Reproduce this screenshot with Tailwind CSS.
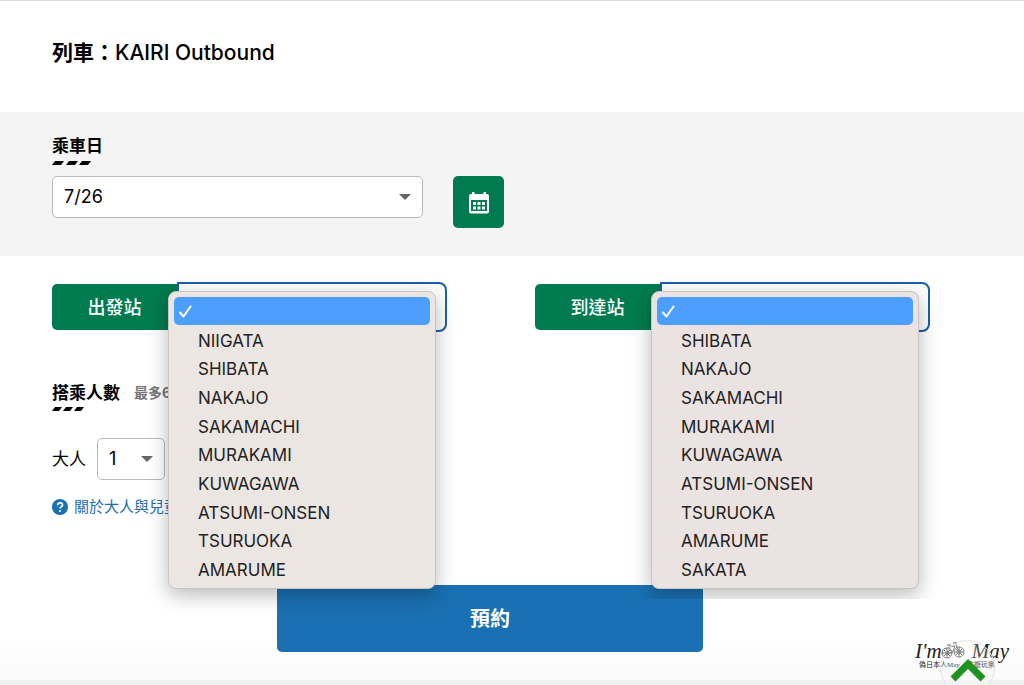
<!DOCTYPE html>
<html lang="zh-Hant">
<head>
<meta charset="utf-8">
<meta name="viewport" content="width=device-width, initial-scale=1">
<title>列車：KAIRI Outbound</title>
<script src="https://cdn.jsdelivr.net/npm/@tailwindcss/browser@4"></script>
</head>
<body class="relative flex min-h-screen flex-col overflow-hidden border-t border-[#dcdcdc] bg-white font-['Inter','Noto_Sans_CJK_TC',sans-serif] text-[17px] text-black">
<header class="px-[52px] pt-9 pb-[43px]">
  <h1 class="text-[21px] leading-8 font-bold">列車：<span class="font-medium">KAIRI Outbound</span></h1>
</header>

<section class="bg-[#f4f4f4] px-[52px] pt-5 pb-7">
  <label for="date" class="block leading-7 font-bold">乘車日</label>
  <svg class="mt-px block" width="40" height="4" viewBox="0 0 40 4" aria-hidden="true"><path d="M3 0H12L9 4H0ZM17 0H26L23 4H14ZM30 0H39L36 4H27Z"/></svg>
  <div class="mt-[11px] flex items-start gap-[30px]">
    <div class="relative w-[371px]">
      <select id="date" class="h-[42px] w-full appearance-none rounded-[5px] border border-[#b9b9b9] bg-white px-[11px] text-lg"><option>7/26</option></select>
      <svg class="pointer-events-none absolute top-[18px] right-3" width="12" height="6" viewBox="0 0 12 6" aria-hidden="true"><path fill="#666" d="M0 0H12L6 6Z"/></svg>
    </div>
    <button type="button" aria-label="日曆" class="flex h-[52px] w-[51px] items-center justify-center rounded-[5px] bg-[#007b50]">
      <svg class="mt-px" width="22" height="22" viewBox="0 0 22 22" aria-hidden="true">
        <path fill="#fff" d="M4 0H6.500V2H15.500V0H18V2H19Q21 2 21 4V19.500Q21 21.500 19 21.500H3Q1 21.500 1 19.500V4Q1 2 3 2H4Z"/>
        <path fill="#007b50" d="M3 8H19V19H3Z"/>
        <path fill="#fff" d="M5 10H8V13H5ZM9.500 10H12.500V13H9.500ZM14 10H17V13H14ZM5 14.500H8V17.500H5ZM9.500 14.500H12.500V17.500H9.500ZM14 14.500H17V17.500H14Z"/>
      </svg>
    </button>
  </div>
</section>

<main class="flex-1 bg-linear-to-b from-white from-90% to-[#fafafa] pt-[26px] pr-[94px] pb-7 pl-[52px]">
  <div class="grid grid-cols-2 gap-[88px]">
    <div class="relative flex items-center">
      <label for="from" class="flex h-[46px] w-[125px] shrink-0 items-center justify-center rounded-l-[5px] bg-[#007b50] pt-px text-lg font-medium text-white">出發站</label>
      <select id="from" class="h-[50px] min-w-0 flex-1 appearance-none rounded-r-lg border-2 border-[#1a5fae] bg-white"><option></option></select>
      <div role="listbox" aria-label="出發站" class="absolute top-[9px] right-[11px] left-[116px] z-10 rounded-lg border border-[#c9c5c2] bg-[#ebe6e2] px-[5px] pt-[5px] pb-[3px] text-[#222] shadow-[0_6px_20px_rgba(0,0,0,0.28)]">
        <button type="button" role="option" aria-selected="true" aria-label="未選擇" class="flex h-7 w-full items-center rounded-[5px] bg-[#4d9fff] pl-[5px]"><svg width="13" height="13" viewBox="0 0 13 13" fill="none" stroke="#fff" stroke-width="2" stroke-linecap="round" stroke-linejoin="round" aria-hidden="true"><path d="M1 7.500L4.500 11.500L11.500 1.500"/></svg></button>
        <div class="mt-0.5 grid h-[258px] auto-rows-fr pl-6 [&>button]:text-left">
          <button type="button" role="option">NIIGATA</button><button type="button" role="option">SHIBATA</button><button type="button" role="option">NAKAJO</button><button type="button" role="option">SAKAMACHI</button><button type="button" role="option">MURAKAMI</button><button type="button" role="option">KUWAGAWA</button><button type="button" role="option">ATSUMI-ONSEN</button><button type="button" role="option">TSURUOKA</button><button type="button" role="option">AMARUME</button>
        </div>
      </div>
    </div>
    <div class="relative flex items-center">
      <label for="to" class="flex h-[46px] w-[125px] shrink-0 items-center justify-center rounded-l-[5px] bg-[#007b50] pt-px text-lg font-medium text-white">到達站</label>
      <select id="to" class="h-[50px] min-w-0 flex-1 appearance-none rounded-r-lg border-2 border-[#1a5fae] bg-white"><option></option></select>
      <div role="listbox" aria-label="到達站" class="absolute top-[9px] right-[11px] left-[116px] z-10 rounded-lg border border-[#c9c5c2] bg-[#ebe3e1] px-[5px] pt-[5px] pb-[3px] text-[#222] shadow-[0_6px_20px_rgba(0,0,0,0.28)] [clip-path:inset(-20px_-30px_-10px_-30px)]">
        <button type="button" role="option" aria-selected="true" aria-label="未選擇" class="flex h-7 w-full items-center rounded-[5px] bg-[#4d9fff] pl-[5px]"><svg width="13" height="13" viewBox="0 0 13 13" fill="none" stroke="#fff" stroke-width="2" stroke-linecap="round" stroke-linejoin="round" aria-hidden="true"><path d="M1 7.500L4.500 11.500L11.500 1.500"/></svg></button>
        <div class="mt-0.5 grid h-[258px] auto-rows-fr pl-6 [&>button]:text-left">
          <button type="button" role="option">SHIBATA</button><button type="button" role="option">NAKAJO</button><button type="button" role="option">SAKAMACHI</button><button type="button" role="option">MURAKAMI</button><button type="button" role="option">KUWAGAWA</button><button type="button" role="option">ATSUMI-ONSEN</button><button type="button" role="option">TSURUOKA</button><button type="button" role="option">AMARUME</button><button type="button" role="option">SAKATA</button>
        </div>
      </div>
    </div>
  </div>

  <div class="mt-[47px] flex items-center gap-[14px] leading-7">
    <h2 class="font-bold">搭乘人數</h2>
    <span class="text-sm font-bold text-[#777]">最多6</span>
  </div>
  <svg class="block" width="33" height="4" viewBox="0 0 33 4" aria-hidden="true"><path d="M3 0H10L7 4H0ZM14 0H21L18 4H11ZM25 0H32L29 4H22Z"/></svg>
  <div class="mt-[27px] flex items-center gap-[11px]">
    <label for="adults" class="pt-0.5">大人</label>
    <div class="relative w-[68px]">
      <select id="adults" class="h-[42px] w-full appearance-none rounded-[5px] border border-[#b9b9b9] bg-white px-[11px] text-lg"><option>1</option></select>
      <svg class="pointer-events-none absolute top-[18px] right-3" width="12" height="6" viewBox="0 0 12 6" aria-hidden="true"><path fill="#666" d="M0 0H12L6 6Z"/></svg>
    </div>
  </div>
  <a href="#" class="mt-[15px] flex w-fit items-center gap-[6px] text-[15px] leading-6 text-[#1a70b2]">
    <svg width="16" height="16" viewBox="0 0 16 16" fill="none" aria-hidden="true"><circle cx="8" cy="8" r="8" fill="#1a70b2"/><path d="M5.700 6.200C5.700 3 10.500 3 10.500 6C10.500 7.700 8 7.700 8 9.500" stroke="#fff" stroke-width="1.800"/><circle cx="8" cy="12" r="1.100" fill="#fff"/></svg>
    <span>關於大人與兒童</span>
  </a>
  <div class="mt-[66px] flex justify-center pr-0.5">
    <button type="button" class="h-[67px] w-[426px] rounded-[5px] bg-[#1a70b2] text-xl font-bold text-white">預約</button>
  </div>
</main>
<footer class="h-[5px] bg-[#f0f0f0]"></footer>

<div class="pointer-events-none absolute right-[15px] bottom-4 w-[94px] text-[#222]">
  <div class="flex items-end justify-between font-['Liberation_Serif',serif] text-[21px] leading-5 italic"><span>I'm</span><span>May</span></div>
  <svg class="absolute top-0 left-[26px]" width="25" height="18" viewBox="0 0 25 18" fill="none" stroke="#666" stroke-width="1" aria-hidden="true"><circle cx="6" cy="12" r="5"/><circle cx="18" cy="11" r="5"/><circle cx="6" cy="12" r="2"/><circle cx="18" cy="11" r="2"/><path d="M6 12L8 6L14 5L11 12H6M8 6L11 12M18 11L14 1M12 2H16M6 4H10M6 7V17M1 12H11M18 6V16M13 11H23M3 9L9 15M9 9L3 15M15 8L21 14M21 8L15 14"/></svg>
  <p class="pl-1 font-['Liberation_Serif','Noto_Sans_CJK_TC',serif] text-[7px] leading-2 whitespace-nowrap">偽日本人May・食遊玩樂</p>
</div>
<a href="#" aria-label="回到頁首" class="absolute right-[29px] -bottom-[10px] flex size-[55px] justify-center rounded-full border border-[#e2e2e2] bg-white/20 pt-[17px]">
  <svg width="36" height="24" viewBox="0 0 36 24" fill="none" stroke="#1f9320" stroke-width="7" aria-hidden="true"><path d="M3 21L18 6L33 21"/></svg>
</a>
</body>
</html>
